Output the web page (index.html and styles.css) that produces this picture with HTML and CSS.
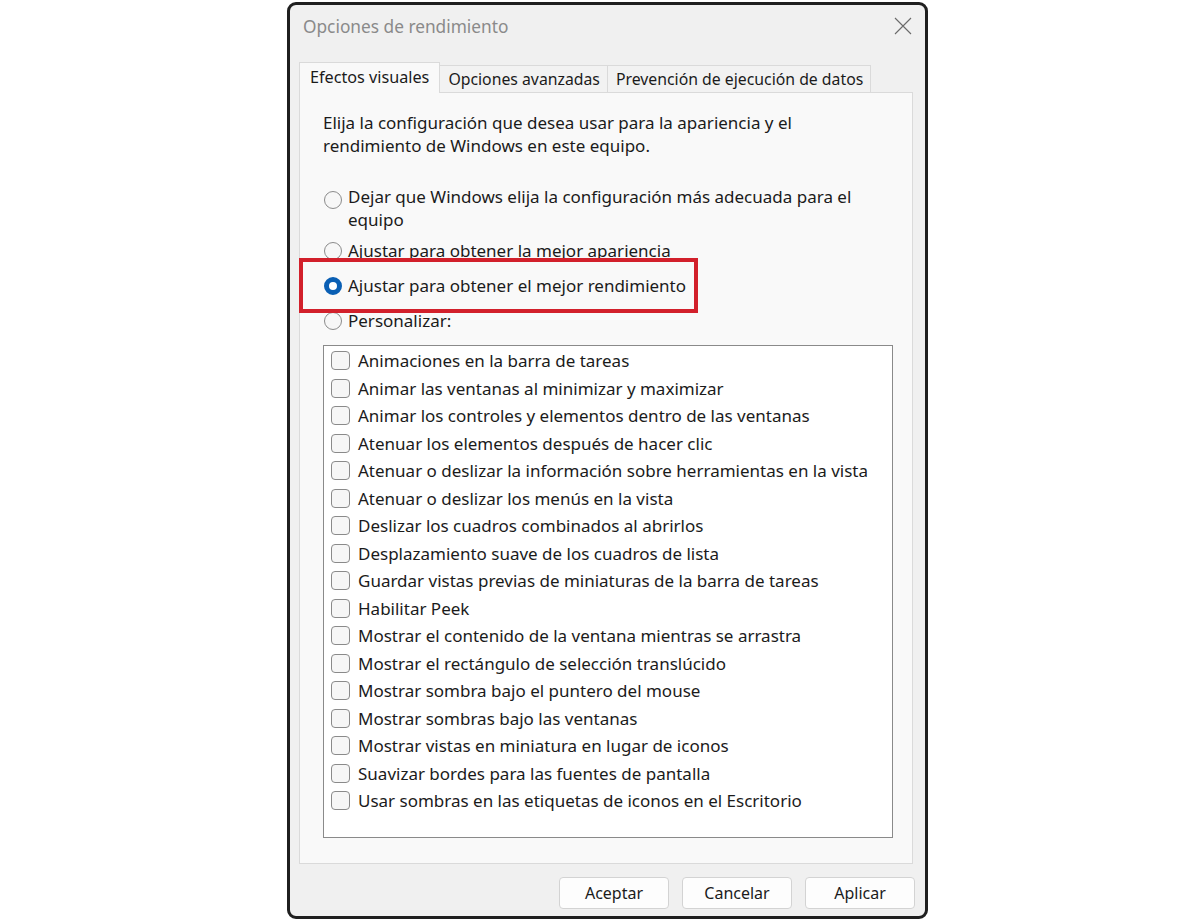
FILE: index.html
```html
<!DOCTYPE html>
<html lang="es">
<head>
<meta charset="utf-8">
<title>Opciones de rendimiento</title>
<link rel="stylesheet" href="styles.css">
</head>
<body>
<div class="window">
  <div class="titlebar">
    <span class="title">Opciones de rendimiento</span>
    <svg class="close" width="18" height="18" viewBox="0 0 18 18"><path d="M1 1 L17 17 M17 1 L1 17" stroke="#6a6a6a" stroke-width="1.1" fill="none"/></svg>
  </div>
  <div class="tabs">
    <div class="tab selected">Efectos visuales</div>
    <div class="tab">Opciones avanzadas</div>
    <div class="tab">Prevención de ejecución de datos</div>
  </div>
  <div class="panel">
    <p class="intro">Elija la configuración que desea usar para la apariencia y el rendimiento de Windows en este equipo.</p>
    <div class="radios">
      <div class="radio-row"><span class="radio"></span><span class="radio-label">Dejar que Windows elija la configuración más adecuada para el equipo</span></div>
      <div class="radio-row"><span class="radio"></span><span class="radio-label">Ajustar para obtener la mejor apariencia</span></div>
      <div class="radio-row"><span class="radio checked"></span><span class="radio-label">Ajustar para obtener el mejor rendimiento</span></div>
      <div class="radio-row"><span class="radio"></span><span class="radio-label">Personalizar:</span></div>
    </div>
    <div class="listbox">
      <div class="check-row"><span class="check"></span>Animaciones en la barra de tareas</div>
      <div class="check-row"><span class="check"></span>Animar las ventanas al minimizar y maximizar</div>
      <div class="check-row"><span class="check"></span>Animar los controles y elementos dentro de las ventanas</div>
      <div class="check-row"><span class="check"></span>Atenuar los elementos después de hacer clic</div>
      <div class="check-row"><span class="check"></span>Atenuar o deslizar la información sobre herramientas en la vista</div>
      <div class="check-row"><span class="check"></span>Atenuar o deslizar los menús en la vista</div>
      <div class="check-row"><span class="check"></span>Deslizar los cuadros combinados al abrirlos</div>
      <div class="check-row"><span class="check"></span>Desplazamiento suave de los cuadros de lista</div>
      <div class="check-row"><span class="check"></span>Guardar vistas previas de miniaturas de la barra de tareas</div>
      <div class="check-row"><span class="check"></span>Habilitar Peek</div>
      <div class="check-row"><span class="check"></span>Mostrar el contenido de la ventana mientras se arrastra</div>
      <div class="check-row"><span class="check"></span>Mostrar el rectángulo de selección translúcido</div>
      <div class="check-row"><span class="check"></span>Mostrar sombra bajo el puntero del mouse</div>
      <div class="check-row"><span class="check"></span>Mostrar sombras bajo las ventanas</div>
      <div class="check-row"><span class="check"></span>Mostrar vistas en miniatura en lugar de iconos</div>
      <div class="check-row"><span class="check"></span>Suavizar bordes para las fuentes de pantalla</div>
      <div class="check-row"><span class="check"></span>Usar sombras en las etiquetas de iconos en el Escritorio</div>
    </div>
    <div class="highlight"></div>
  </div>
  <div class="buttons">
    <button class="btn">Aceptar</button>
    <button class="btn">Cancelar</button>
    <button class="btn">Aplicar</button>
  </div>
</div>
</body>
</html>
```
FILE: styles.css
```css
* { box-sizing: border-box; }
html, body { margin: 0; padding: 0; background: #ffffff; }
body {
  font-family: "Noto Sans", "Open Sans", sans-serif;
  font-size: 17px;
  color: #1b1b1b;
}
.window {
  margin: 2px 0 0 287px;
  width: 641px;
  height: 917px;
  border: 3px solid #1f1f1f;
  border-radius: 9px;
  background: #f0f0f0;
  display: flex;
  flex-direction: column;
}
.titlebar {
  height: 42px;
  display: flex;
  align-items: center;
  justify-content: space-between;
  padding: 0 13px 0 13px;
}
.title {
  font-size: 17.3px;
  color: #8a8a8a;
}
.tabs {
  display: flex;
  align-items: flex-end;
  margin: 15px 0 0 9px;
  height: 30px;
  position: relative;
  z-index: 1;
  font-size: 15.8px;
}
.tab {
  height: 27px;
  line-height: 26px;
  padding: 0 7px 0 8px;
  border: 1px solid #dadada;
  border-bottom: none;
  background: #f2f2f2;
  white-space: nowrap;
}
.tab + .tab { border-left: none; }
.tab.selected {
  height: 31px;
  line-height: 29px;
  padding: 0 10px;
  font-size: 16.2px;
  background: #f9f9f9;
  margin-bottom: -1px;
  border-right: 1px solid #dadada;
}
.panel {
  position: relative;
  margin: 0 12px 0 9px;
  height: 772px;
  border: 1px solid #dadada;
  background: #f9f9f9;
  padding: 18px 19px 0 23px;
}
.intro {
  margin: 0;
  line-height: 23px;
  width: 520px;
}
.radios {
  margin-top: 28px;
}
.radio-row {
  display: flex;
  align-items: flex-start;
  line-height: 23px;
  margin-bottom: 12px;
}
.radio-row:first-child { margin-bottom: 8px; }
.radio-row:last-child { margin-bottom: 0; }
.radio {
  flex: none;
  width: 18px;
  height: 18px;
  border-radius: 50%;
  border: 1px solid #8b8b8b;
  background: #f7f7f7;
  margin: 3px 6px 0 1px;
}
.radio-row:first-child .radio { margin-top: 6px; }
.radio.checked {
  border: 5px solid #0a5fb4;
  background: #ffffff;
}
.radio-label { width: 530px; }
.listbox {
  margin-top: 13px;
  width: 570px;
  height: 493px;
  border: 1px solid #8a8a8a;
  background: #ffffff;
  padding: 1px 0 0 7px;
}
.check-row {
  display: flex;
  align-items: center;
  height: 27.5px;
  white-space: nowrap;
}
.check {
  flex: none;
  width: 19px;
  height: 19px;
  border: 1px solid #8a8a8a;
  border-radius: 4px;
  background: #f6f6f6;
  margin-right: 8px;
}
.highlight {
  position: absolute;
  left: -1px;
  top: 165px;
  width: 399px;
  height: 55px;
  border: 4px solid #d2202b;
}
.buttons {
  display: flex;
  justify-content: flex-end;
  gap: 13px;
  margin: 13px 10px 0 0;
}
.btn {
  width: 110px;
  height: 32px;
  font-family: inherit;
  font-size: 16px;
  color: #1b1b1b;
  background: #fdfdfd;
  border: 1px solid #d3d3d3;
  border-radius: 4px;
  padding: 0;
}
```
